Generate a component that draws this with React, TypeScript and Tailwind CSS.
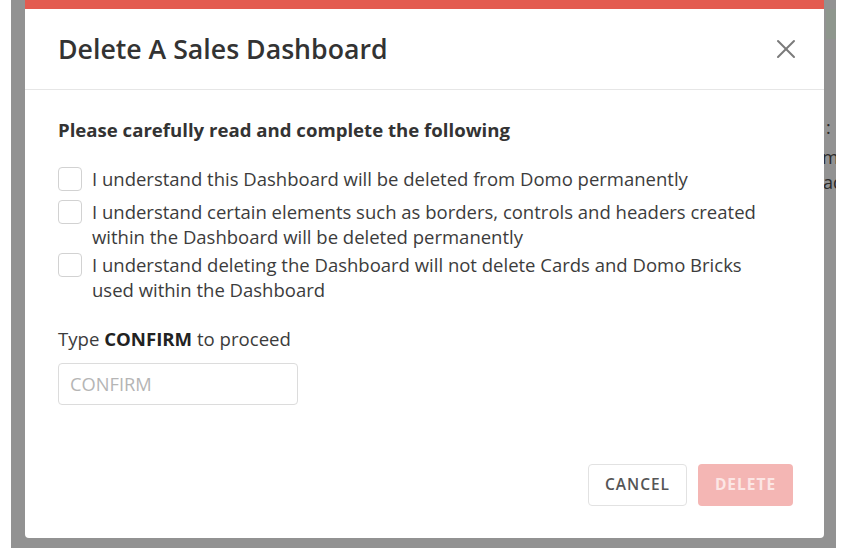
import React from "react";

function CloseIcon() {
  return (
    <svg width="20" height="20" viewBox="0 0 20 20" fill="none" stroke="#7a7a7a" strokeWidth="2" strokeLinecap="round">
      <path d="M2 2 L18 18" />
      <path d="M18 2 L2 18" />
    </svg>
  );
}

function Row({ children, className }: { children: React.ReactNode; className?: string }) {
  return (
    <div className={"flex items-start gap-[10px] " + (className ?? "")}>
      <div className="w-[24px] h-[24px] shrink-0 mt-[1px] rounded-[4px] border border-[#d2d2d2] bg-white" />
      <div className="text-[18.5px] leading-[25px] text-[#3c3c3c] w-[690px]">{children}</div>
    </div>
  );
}

export default function App() {
  return (
    <div className="w-[846px] h-[556px] bg-white pl-[11px] font-['Open_Sans',sans-serif] overflow-hidden">
      <div className="w-[825px] h-[548px] bg-[#929292] flex pl-[14px]">
        <div className="w-[799px] h-[538px] bg-white rounded-b-[4px] flex flex-col overflow-hidden">
          <div className="h-[9px] bg-[#e35b50] shrink-0" />
          <div className="h-[81px] shrink-0 border-b border-[#e6e6e6] flex items-center justify-between pl-[33px] pr-[28px]">
            <h2 className="text-[26.7px] leading-[32px] font-semibold text-[#333333]">Delete A Sales Dashboard</h2>
            <CloseIcon />
          </div>
          <div className="flex-1 flex flex-col pl-[33px] pt-[28px]">
            <p className="text-[18.6px] leading-[24px] font-bold text-[#333333]">
              Please carefully read and complete the following
            </p>
            <Row className="mt-[24px]">I understand this Dashboard will be deleted from Domo permanently</Row>
            <Row className="mt-[8px]">
              I understand certain elements such as borders, controls and headers created within the Dashboard will
              be deleted permanently
            </Row>
            <Row className="mt-[3px]">
              I understand deleting the Dashboard will not delete Cards and Domo Bricks used within the Dashboard
            </Row>
            <p className="mt-[25px] text-[18.6px] leading-[24px] text-[#3c3c3c]">
              Type <span className="font-bold text-[#222]">CONFIRM</span> to proceed
            </p>
            <div className="mt-[12px] w-[240px] h-[42px] rounded-[4px] border border-[#dcdcdc] flex items-center pl-[11px]">
              <span className="text-[18.3px] text-[#b5b5b5]">CONFIRM</span>
            </div>
            <div className="mt-[59px] flex justify-end gap-[11px] pr-[31px]">
              <button className="w-[99px] h-[42px] rounded-[4px] border border-[#e2e2e2] bg-white text-[15.5px] font-semibold tracking-[1px] text-[#555555]">
                CANCEL
              </button>
              <button className="w-[95px] h-[42px] rounded-[4px] bg-[#f4b6b4] text-[15.5px] font-bold tracking-[1px] text-[#fce6e5]">
                DELETE
              </button>
            </div>
          </div>
        </div>
        <div className="w-[12px] overflow-hidden flex flex-col text-[18px] leading-[25px] text-[#2a2a2a] pl-[2px]">
          <div className="h-[9px]" />
          <div className="h-[30px] bg-[#8e968d]" />
          <div className="mt-[76px] h-[25px] whitespace-nowrap">:</div>
          <div className="mt-[5px] h-[25px] whitespace-nowrap -ml-[4px]">m</div>
          <div className="h-[25px] whitespace-nowrap -ml-[3px]">ad</div>
        </div>
      </div>
    </div>
  );
}
